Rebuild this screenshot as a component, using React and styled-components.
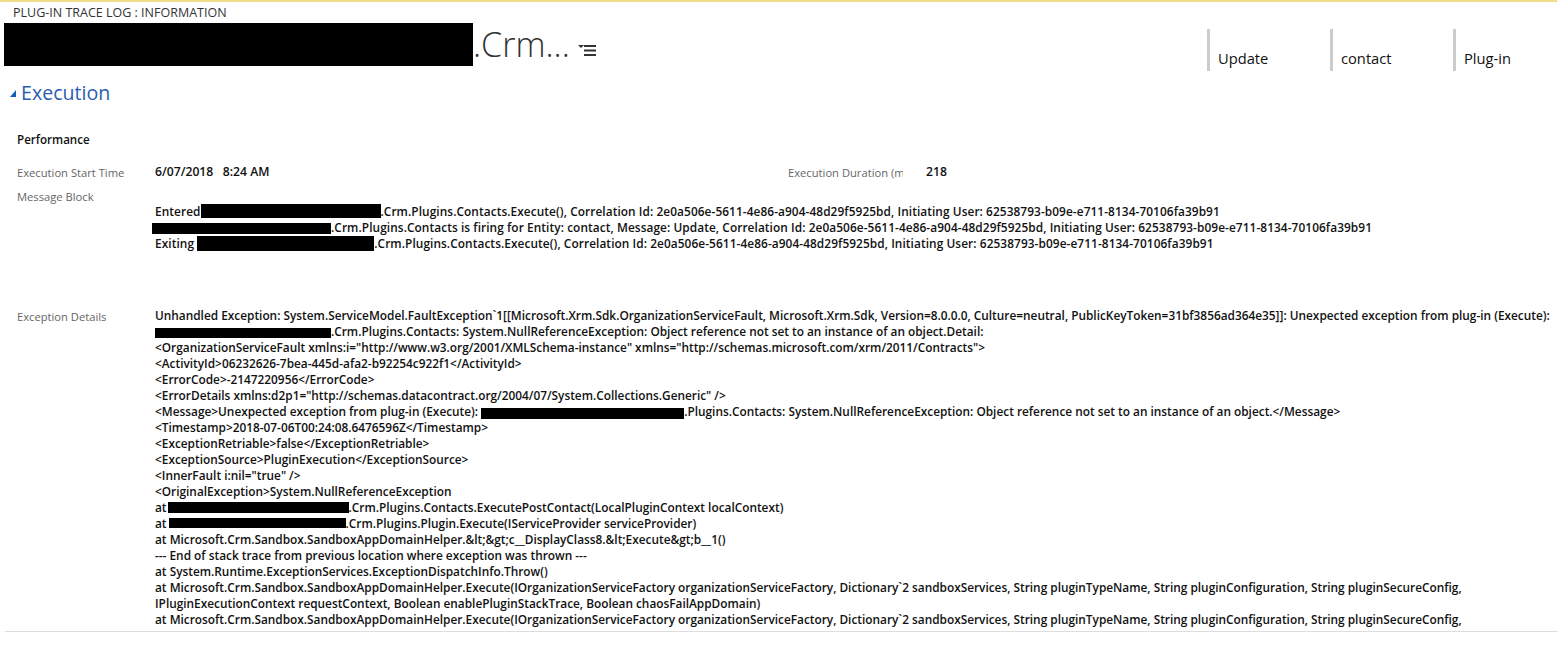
import React from 'react'
import styled, { createGlobalStyle } from 'styled-components'

const GlobalStyle = createGlobalStyle`
    html, body {
        margin: 0;
        padding: 0;
        background: #fff;
        overflow: hidden;
    }
    body {
        font-family: "Open Sans", "Liberation Sans", sans-serif;
    }
`

function Redacted({ w, h = 14, drop = 2 }) {
    return <Black $w={w} $h={h} $drop={drop} />
}

function Field({ label, labelWidth, children }) {
    return (
        <FieldCell>
            <Label $w={labelWidth} $top={1}>{label}</Label>
            {children}
        </FieldCell>
    )
}

function App() {
    return (
        <Page>
            <GlobalStyle />
            <Kicker>PLUG-IN TRACE LOG : INFORMATION</Kicker>
            <Header>
                <TitleRow>
                    <TitleBlack />
                    <Title>.Crm...</Title>
                    <MenuIcon width="18" height="11" viewBox="0 0 18 11">
                        <path d="M0 0h6L3 3z" fill="#333" />
                        <path d="M6 0h12v2H6zM6 4.500h12v2H6zM6 9h12v2H6z" fill="#333" />
                    </MenuIcon>
                </TitleRow>
                <Tiles>
                    <Tile>Update</Tile>
                    <Tile>contact</Tile>
                    <Tile>Plug-in</Tile>
                </Tiles>
            </Header>
            <SectionHead>
                <Caret width="6" height="7" viewBox="0 0 6 7"><path d="M6 0v7H0z" fill="#1160b7" /></Caret>
                <SectionTitle>Execution</SectionTitle>
            </SectionHead>
            <SubHead>Performance</SubHead>
            <TimeRow>
                <Field label="Execution Start Time"><Value>6/07/2018&nbsp;&nbsp;&nbsp;8:24 AM</Value></Field>
                <Field label="Execution Duration (m" labelWidth={115}><ValueGap /><Value>218</Value></Field>
            </TimeRow>
            <Row $height={119}>
                <Label $top={1}>Message Block</Label>
                <Lines $top={15} $spacing={0.08}>
                    <div>Entered<Redacted w={180} />.Crm.Plugins.Contacts.Execute(), Correlation Id: 2e0a506e-5611-4e86-a904-48d29f5925bd, Initiating User: 62538793-b09e-e711-8134-70106fa39b91</div>
                    <Shift><Redacted w={179} h={11} />.Crm.Plugins.Contacts is firing for Entity: contact, Message: Update, Correlation Id: 2e0a506e-5611-4e86-a904-48d29f5925bd, Initiating User: 62538793-b09e-e711-8134-70106fa39b91</Shift>
                    <div>Exiting <Redacted w={177} h={15} drop={3} />.Crm.Plugins.Contacts.Execute(), Correlation Id: 2e0a506e-5611-4e86-a904-48d29f5925bd, Initiating User: 62538793-b09e-e711-8134-70106fa39b91</div>
                </Lines>
            </Row>
            <Row $height={324}>
                <Label $top={2}>Exception Details</Label>
                <Lines>
                    <div>Unhandled Exception: System.ServiceModel.FaultException`1[[Microsoft.Xrm.Sdk.OrganizationServiceFault, Microsoft.Xrm.Sdk, Version=8.0.0.0, Culture=neutral, PublicKeyToken=31bf3856ad364e35]]: Unexpected exception from plug-in (Execute):</div>
                    <div><Redacted w={176} h={10} />.Crm.Plugins.Contacts: System.NullReferenceException: Object reference not set to an instance of an object.Detail:</div>
                    <div>{'<OrganizationServiceFault xmlns:i="http://www.w3.org/2001/XMLSchema-instance" xmlns="http://schemas.microsoft.com/xrm/2011/Contracts">'}</div>
                    <div>{'<ActivityId>06232626-7bea-445d-afa2-b92254c922f1</ActivityId>'}</div>
                    <div>{'<ErrorCode>-2147220956</ErrorCode>'}</div>
                    <div>{'<ErrorDetails xmlns:d2p1="http://schemas.datacontract.org/2004/07/System.Collections.Generic" />'}</div>
                    <div>{'<Message>Unexpected exception from plug-in (Execute): '}<Redacted w={203} h={11} drop={3} />.Plugins.Contacts: System.NullReferenceException: Object reference not set to an instance of an object.{'</Message>'}</div>
                    <div>{'<Timestamp>2018-07-06T00:24:08.6476596Z</Timestamp>'}</div>
                    <div>{'<ExceptionRetriable>false</ExceptionRetriable>'}</div>
                    <div>{'<ExceptionSource>PluginExecution</ExceptionSource>'}</div>
                    <div>{'<InnerFault i:nil="true" />'}</div>
                    <div>{'<OriginalException>System.NullReferenceException'}</div>
                    <div>at<Gap $w={1} /><Redacted w={181} h={11} drop={1} />.Crm.Plugins.Contacts.ExecutePostContact(LocalPluginContext localContext)</div>
                    <div>at<Gap $w={2} /><Redacted w={177} h={10} drop={0} />.Crm.Plugins.Plugin.Execute(IServiceProvider serviceProvider)</div>
                    <div>{'at Microsoft.Crm.Sandbox.SandboxAppDomainHelper.&lt;&gt;c__DisplayClass8.&lt;Execute&gt;b__1()'}</div>
                    <div>--- End of stack trace from previous location where exception was thrown ---</div>
                    <div>at System.Runtime.ExceptionServices.ExceptionDispatchInfo.Throw()</div>
                    <div>{'at Microsoft.Crm.Sandbox.SandboxAppDomainHelper.Execute(IOrganizationServiceFactory organizationServiceFactory, Dictionary`2 sandboxServices, String pluginTypeName, String pluginConfiguration, String pluginSecureConfig,'}</div>
                    <div>IPluginExecutionContext requestContext, Boolean enablePluginStackTrace, Boolean chaosFailAppDomain)</div>
                    <div>{'at Microsoft.Crm.Sandbox.SandboxAppDomainHelper.Execute(IOrganizationServiceFactory organizationServiceFactory, Dictionary`2 sandboxServices, String pluginTypeName, String pluginConfiguration, String pluginSecureConfig,'}</div>
                </Lines>
            </Row>
            <BottomRule />
        </Page>
    )
}

export default App

const Page = styled.div`
    width: 1557px;
    height: 651px;
    overflow: hidden;
    box-sizing: border-box;
    border-top: 2px solid #f0dd8c;
`
const Kicker = styled.div`
    padding: 3px 0 0 13px;
    height: 18px;
    font-size: 12.5px;
    line-height: 16px;
    color: #333;
    white-space: nowrap;
`
const Header = styled.div`
    display: flex;
    justify-content: space-between;
    height: 47px;
`
const TitleRow = styled.div`
    display: flex;
    align-items: flex-start;
    padding-left: 4px;
`
const TitleBlack = styled.div`
    width: 469px;
    height: 43px;
    background: #000;
`
const Title = styled.div`
    width: 105px;
    font-size: 34px;
    font-weight: 300;
    line-height: 43px;
    color: #333;
    white-space: nowrap;
`
const MenuIcon = styled.svg`
    margin-top: 22px;
`
const Tiles = styled.div`
    display: flex;
    padding-top: 6px;
    height: 42px;
`
const Tile = styled.div`
    width: 123px;
    height: 42px;
    border-left: 3px solid #ccc;
    padding: 19px 0 0 8px;
    box-sizing: border-box;
    font-size: 14.700px;
    line-height: 20px;
    color: #111;
    &:last-child {
        width: 104px;
    }
`
const SectionHead = styled.div`
    display: flex;
    align-items: center;
    height: 38px;
    padding-left: 10px;
    margin-top: 4px;
`
const Caret = styled.svg`
    margin-right: 5px;
`
const SectionTitle = styled.div`
    font-size: 19.600px;
    line-height: 28px;
    color: #2a5db0;
`
const SubHead = styled.div`
    padding: 19px 0 0 17px;
    height: 33px;
    font-size: 11.600px;
    line-height: 18px;
    font-weight: 600;
    color: #111;
`
const TimeRow = styled.div`
    display: grid;
    grid-template-columns: 771px 1fr;
    padding-left: 17px;
    height: 24px;
`
const FieldCell = styled.div`
    display: flex;
`
const Label = styled.div`
    width: ${props => props.$w || 138}px;
    flex: none;
    padding-top: ${props => props.$top || 0}px;
    font-size: 11.200px;
    line-height: 16px;
    color: #666;
    white-space: nowrap;
    overflow: hidden;
`
const ValueGap = styled.div`
    width: 23px;
    flex: none;
`
const Value = styled.div`
    font-size: 12.200px;
    line-height: 16px;
    font-weight: 600;
    color: #111;
    white-space: nowrap;
`
const Row = styled.div`
    display: flex;
    padding-left: 17px;
    height: ${props => props.$height}px;
`
const Lines = styled.div`
    padding-top: ${props => props.$top || 0}px;
    font-size: 11.850px;
    letter-spacing: ${props => props.$spacing || 0}px;
    line-height: 16px;
    font-weight: 600;
    color: #111;
    white-space: nowrap;
`
const Shift = styled.div`
    margin-left: -3px;
`
const Gap = styled.span`
    display: inline-block;
    width: ${props => props.$w}px;
`
const Black = styled.span`
    display: inline-block;
    width: ${props => props.$w}px;
    height: ${props => props.$h}px;
    background: #000;
    vertical-align: -${props => props.$drop}px;
`
const BottomRule = styled.div`
    margin-left: 5px;
    height: 1px;
    background: #ddd;
`
